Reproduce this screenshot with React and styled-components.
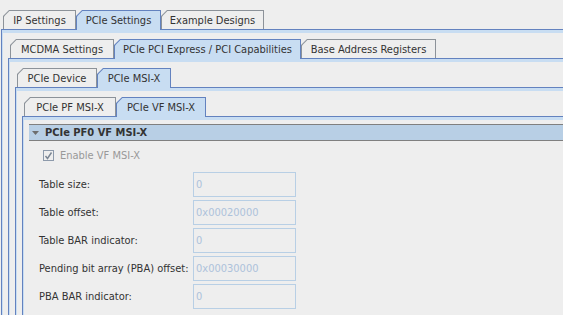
import React from "react"
import styled, { createGlobalStyle } from "styled-components"

const GlobalStyle = createGlobalStyle`
  body {
    margin: 0;
    background: #eeeeee;
    overflow: hidden;
    font-family: "DejaVu Sans Condensed", "DejaVu Sans", sans-serif;
    font-size: 11px;
    color: #333333;
  }
`

const Page = styled.div`
  width: 720px;
  padding: 10px 0 0 1px;
  box-sizing: border-box;
`

const Pane = styled.div`
  display: flex;
  flex-direction: column;
`

const TabRow = styled.div`
  display: flex;
  align-items: flex-end;
  height: 19px;
  margin-left: 2px;
`

const TabEdge = styled.div`
  position: relative;
  z-index: ${p => (p.$active ? 1 : 0)};
  width: ${p => p.$w}px;
  height: ${p => (p.$active ? 20 : 19)}px;
  margin-bottom: ${p => (p.$active ? -1 : 0)}px;
  padding: 1px 1px 0 1px;
  box-sizing: border-box;
  background: ${p => (p.$active ? "#6382bf" : "#8c9299")};
  clip-path: polygon(6px 0, 100% 0, 100% 100%, 0 100%, 0 6px);
`

const TabFace = styled.div`
  height: 100%;
  display: flex;
  align-items: center;
  justify-content: center;
  padding-bottom: ${p => (p.$active ? 1 : 0)}px;
  box-sizing: border-box;
  background: ${p => (p.$active ? "#c8ddf2" : "#eeeeee")};
  clip-path: polygon(5.4px 0, 100% 0, 100% 100%, 0 100%, 0 5.4px);
  white-space: nowrap;
`

const PaneBody = styled.div`
  border: 1px solid #6382bf;
  border-bottom: none;
`

const PaneInner = styled.div`
  border-top: 3px solid #c8ddf2;
  border-left: 1px solid #c8ddf2;
  padding: ${p => p.$top}px 0 0 5px;
`

const Header = styled.div`
  display: flex;
  align-items: center;
  gap: 6px;
  height: 15px;
  padding-left: 3px;
  border-top: 1px solid #7f7f7f;
  border-bottom: 1px solid #7f7f7f;
  background: #b8cfe5;
  font-weight: bold;
`

const CheckRow = styled.div`
  display: flex;
  align-items: center;
  gap: 6px;
  margin-top: 8px;
  padding-left: 14px;
  color: #999999;
`

const CheckBox = styled.div`
  width: 11px;
  height: 11px;
  box-sizing: border-box;
  border: 1px solid #8d9aab;
  display: flex;
  align-items: center;
  justify-content: center;
`

const Form = styled.div`
  display: grid;
  grid-template-columns: 154px 103px;
  row-gap: 3px;
  align-items: center;
  margin-top: 10px;
  padding: 0 0 40px 10px;
`

const Label = styled.div`
  white-space: nowrap;
`

const Field = styled.div`
  height: 25px;
  box-sizing: border-box;
  border: 1px solid #b8cfe5;
  padding-left: 2px;
  display: flex;
  align-items: center;
  color: #adc2db;
`

function TabPane({ tabs, active, top = 6, children }) {
  return (
    <Pane>
      <TabRow>
        {tabs.map((t, i) => (
          <TabEdge key={t.label} $w={t.w} $active={i === active}>
            <TabFace $active={i === active}>{t.label}</TabFace>
          </TabEdge>
        ))}
      </TabRow>
      <PaneBody>
        <PaneInner $top={top}>{children}</PaneInner>
      </PaneBody>
    </Pane>
  )
}

const rows = [
  ["Table size:", "0"],
  ["Table offset:", "0x00020000"],
  ["Table BAR indicator:", "0"],
  ["Pending bit array (PBA) offset:", "0x00030000"],
  ["PBA BAR indicator:", "0"],
]

export default function App() {
  return (
    <>
      <GlobalStyle />
      <Page>
        <TabPane
          active={1}
          tabs={[
            { label: "IP Settings", w: 73 },
            { label: "PCIe Settings", w: 85 },
            { label: "Example Designs", w: 103 },
          ]}
        >
          <TabPane
            active={1}
            tabs={[
              { label: "MCDMA Settings", w: 104 },
              { label: "PCIe PCI Express / PCI Capabilities", w: 187 },
              { label: "Base Address Registers", w: 135 },
            ]}
          >
            <TabPane
              active={1}
              tabs={[
                { label: "PCIe Device", w: 80 },
                { label: "PCIe MSI-X", w: 74 },
              ]}
            >
              <TabPane
                active={1}
                top={4}
                tabs={[
                  { label: "PCIe PF MSI-X", w: 92 },
                  { label: "PCIe VF MSI-X", w: 90 },
                ]}
              >
                <Header>
                  <svg width="7" height="4" viewBox="0 0 7 4">
                    <polygon points="0,0 7,0 3.5,4" fill="#6e6e6e" />
                  </svg>
                  PCIe PF0 VF MSI-X
                </Header>
                <CheckRow>
                  <CheckBox>
                    <svg width="9" height="9" viewBox="0 0 9 9">
                      <path d="M1.5 5 L3.5 7.5 L7.5 1.5" stroke="#7a8593" strokeWidth="1.4" fill="none" />
                    </svg>
                  </CheckBox>
                  Enable VF MSI-X
                </CheckRow>
                <Form>
                  {rows.map(([label, value]) => (
                    <React.Fragment key={label}>
                      <Label>{label}</Label>
                      <Field>{value}</Field>
                    </React.Fragment>
                  ))}
                </Form>
              </TabPane>
            </TabPane>
          </TabPane>
        </TabPane>
      </Page>
    </>
  )
}
